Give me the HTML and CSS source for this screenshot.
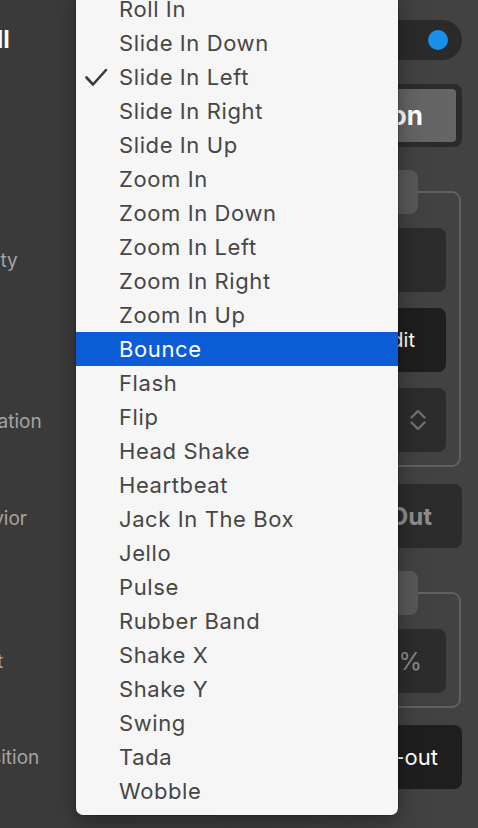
FILE: index.html
```
<!DOCTYPE html>
<html>
<head>
<meta charset="utf-8">
<link rel="stylesheet" href="styles.css">
</head>
<body>
<div class="page">
  <div class="labels">
    <div class="heading">Scroll</div>
    <div class="label l-opacity">Opacity</div>
    <div class="label l-animation">Animation</div>
    <div class="label l-behavior">Behavior</div>
    <div class="label l-effect">Effect</div>
    <div class="label l-transition">Transition</div>
  </div>
  <div class="controls">
    <div class="toggle"><span class="dot"></span></div>
    <div class="btn-outer"><div class="btn-inner">Animation</div></div>
    <div class="tab"></div>
    <div class="frame frame-big">
      <div class="field"></div>
      <div class="field field-dark text-edit">Edit</div>
      <div class="field select">
        <svg width="16" height="22" viewBox="0 0 16 22"><path d="M1.5 8.5 L8 2 L14.5 8.5 M1.5 13.5 L8 20 L14.5 13.5" fill="none" stroke="#6f6f6f" stroke-width="2.4" stroke-linecap="round" stroke-linejoin="round"/></svg>
      </div>
    </div>
    <div class="block text-out">Fade Out</div>
    <div class="tab"></div>
    <div class="frame frame-small">
      <div class="field text-pct">100 %</div>
    </div>
    <div class="block block-dark text-ease">ease-in-out</div>
  </div>
</div>
<ul class="menu">
  <li>Roll In</li>
  <li>Slide In Down</li>
  <li class="checked"><svg class="check" width="24" height="20" viewBox="0 0 24 20"><path d="M1.5 8.5 L8 15.5 L21 1" fill="none" stroke="#3b3b3b" stroke-width="2.6" stroke-linecap="round" stroke-linejoin="round"/></svg>Slide In Left</li>
  <li>Slide In Right</li>
  <li>Slide In Up</li>
  <li>Zoom In</li>
  <li>Zoom In Down</li>
  <li>Zoom In Left</li>
  <li>Zoom In Right</li>
  <li>Zoom In Up</li>
  <li class="active">Bounce</li>
  <li>Flash</li>
  <li>Flip</li>
  <li>Head Shake</li>
  <li>Heartbeat</li>
  <li>Jack In The Box</li>
  <li>Jello</li>
  <li>Pulse</li>
  <li>Rubber Band</li>
  <li>Shake X</li>
  <li>Shake Y</li>
  <li>Swing</li>
  <li>Tada</li>
  <li>Wobble</li>
</ul>
</body>
</html>
```
FILE: styles.css
```
* { box-sizing: border-box; }
html, body { margin: 0; padding: 0; }
body {
  width: 478px;
  height: 828px;
  overflow: hidden;
  background: linear-gradient(to right, #3a3a3a 0%, #3c3c3c 60%, #434343 100%);
  font-family: Inter, "Noto Sans", sans-serif;
  position: relative;
}
.page {
  display: flex;
  justify-content: space-between;
  height: 828px;
}
.labels {
  padding-top: 25px;
  white-space: nowrap;
}
.heading {
  margin-left: -57px;
  font-size: 24px;
  line-height: 30px;
  font-weight: 700;
  color: #ffffff;
}
.label {
  font-size: 19px;
  line-height: 24px;
  color: #a4a4a4;
}
.l-opacity { margin-top: 194px; margin-left: -52px; }
.l-animation { margin-top: 137px; margin-left: -48px; }
.l-behavior { margin-top: 73px; margin-left: -52px; }
.l-effect { margin-top: 119px; margin-left: -49px; }
.l-transition { margin-top: 72px; margin-left: -49px; }

.controls {
  width: 212px;
  margin-right: 16px;
  padding-top: 20px;
  display: flex;
  flex-direction: column;
  align-items: flex-end;
}
.toggle {
  width: 100px;
  height: 40px;
  border-radius: 20px;
  background: #2a2a2a;
  display: flex;
  align-items: center;
  justify-content: flex-end;
  padding-right: 14px;
}
.dot {
  width: 20px;
  height: 20px;
  border-radius: 50%;
  background: #1b90e8;
}
.btn-outer {
  margin-top: 24px;
  width: 212px;
  height: 63px;
  border-radius: 8px;
  background: #2b2b2b;
  padding: 5px 6px 5px 5px;
}
.btn-inner {
  height: 100%;
  border-radius: 4px;
  background: linear-gradient(to right, #585858, #666666);
  color: #ffffff;
  font-size: 26px;
  font-weight: 700;
  display: flex;
  align-items: center;
  justify-content: flex-end;
  padding-right: 33px;
  white-space: nowrap;
  overflow: hidden;
}
.tab {
  margin-top: 23px;
  margin-right: 44px;
  width: 100px;
  height: 44px;
  border-radius: 8px;
  background: #575757;
  position: relative;
  z-index: 1;
}
.frame {
  margin-top: -23px;
  margin-right: 1px;
  width: 211px;
  border: 2px solid #606060;
  border-radius: 9px;
  padding: 35px 13px 13px 13px;
  display: flex;
  flex-direction: column;
  gap: 16px;
}
.frame-big { height: 276px; }
.frame-small { height: 116px; }
.field {
  height: 64px;
  border-radius: 8px;
  background: #2c2c2c;
  display: flex;
  align-items: center;
  justify-content: flex-end;
  white-space: nowrap;
  overflow: hidden;
}
.field-dark { background: #1e1e1e; }
.text-edit {
  color: #ffffff;
  font-size: 20px;
  padding-right: 31px;
}
.select { padding-right: 20px; }
.text-pct {
  color: #8a8a8a;
  font-size: 24px;
  padding-right: 24px;
}
.block {
  margin-top: 17px;
  width: 212px;
  height: 64px;
  border-radius: 8px;
  background: #2c2c2c;
  display: flex;
  align-items: center;
  justify-content: flex-end;
  white-space: nowrap;
  overflow: hidden;
}
.block-dark { background: #1e1e1e; }
.text-out {
  color: #8c8c8c;
  font-size: 24px;
  font-weight: 700;
  padding-right: 30px;
}
.text-ease {
  color: #ffffff;
  font-size: 22px;
  padding-right: 24px;
}

.menu {
  position: absolute;
  left: 76px;
  top: -8px;
  width: 322px;
  margin: 0;
  padding: 0 0 7px 0;
  list-style: none;
  background: #f6f6f6;
  border-radius: 0 0 7px 7px;
  box-shadow: 0 0 0 0.5px rgba(0,0,0,0.35), 0 6px 20px rgba(0,0,0,0.35);
  z-index: 5;
}
.menu li {
  position: relative;
  height: 34px;
  line-height: 35px;
  padding-left: 43px;
  font-size: 22px;
  letter-spacing: 0.6px;
  color: #464646;
  white-space: nowrap;
}
.menu li.active {
  background: #0b5cd5;
  color: #ffffff;
}
.check {
  position: absolute;
  left: 9px;
  top: 9px;
}
```
